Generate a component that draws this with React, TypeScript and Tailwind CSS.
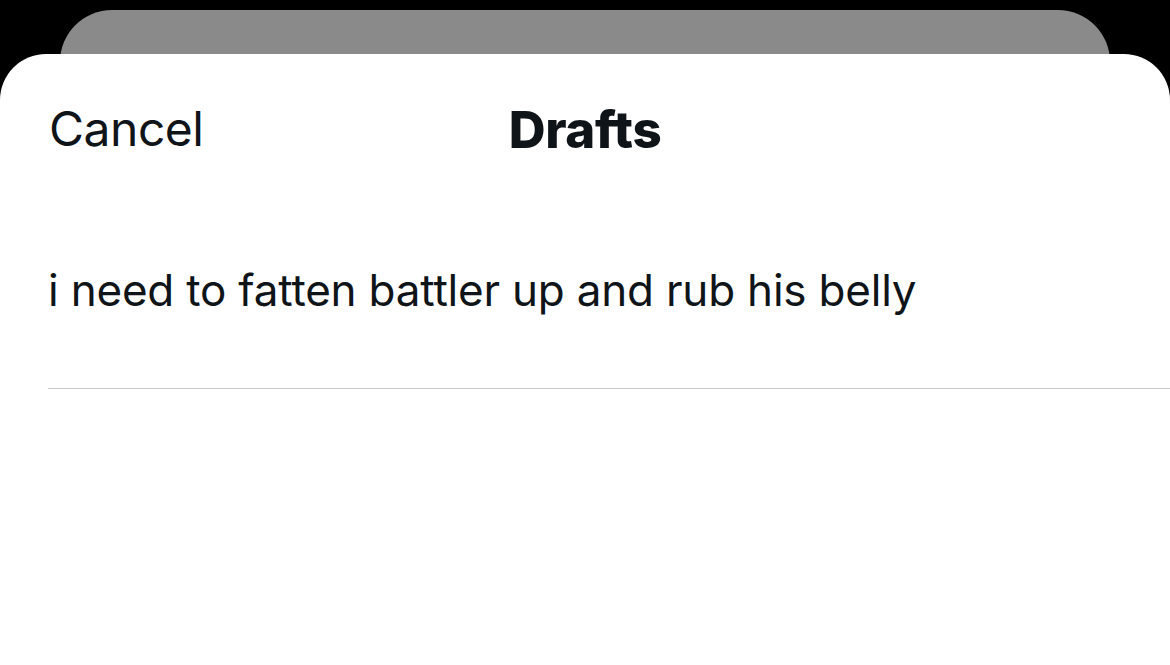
export default function App() {
  return (
    <div
      className="h-[665px] w-[1170px] overflow-hidden bg-black"
      style={{ fontFamily: 'Inter, "Noto Sans", sans-serif' }}
    >
      {/* card behind the sheet */}
      <div className="mx-[60px] mt-[10px] h-[80px] rounded-t-[52px] bg-[#8a8a8a]" />

      {/* sheet */}
      <div className="-mt-[36px] h-[620px] rounded-t-[46px] bg-white text-[#0f1419]">
        <div className="relative flex h-[150px] items-center px-[49px]">
          <span className="text-[48px] leading-none tracking-[-0.5px]">Cancel</span>
          <span className="absolute left-1/2 -translate-x-1/2 text-[51px] font-extrabold leading-none tracking-[-0.3px]">
            Drafts
          </span>
        </div>
        <div className="ml-[48px] border-b border-[#c8c8c8] pt-[64px] pb-[76px]">
          <p className="text-[44px] leading-none tracking-[-0.2px]">
            i need to fatten battler up and rub his belly
          </p>
        </div>
      </div>
    </div>
  );
}
